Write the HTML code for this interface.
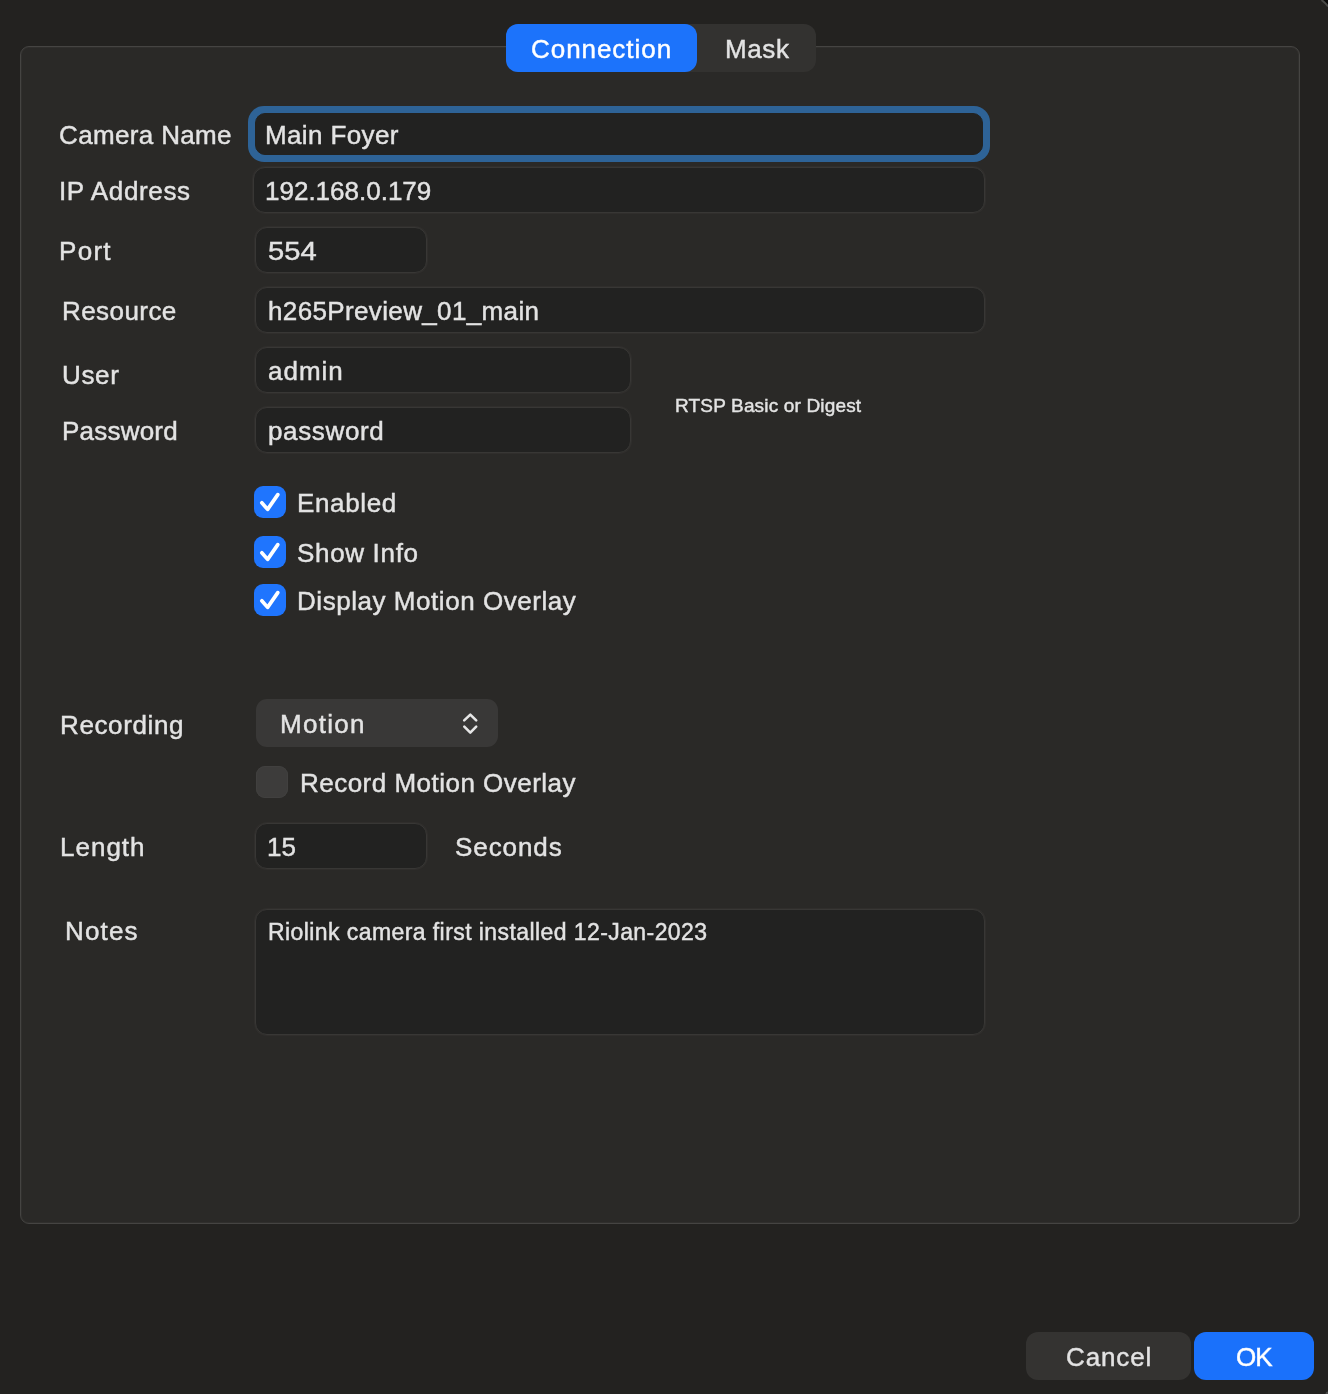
<!DOCTYPE html>
<html><head><meta charset="utf-8">
<style>
html,body{margin:0;padding:0;}
body{width:1328px;height:1394px;background:#232220;position:relative;overflow:hidden;font-family:"Liberation Sans",sans-serif;color:#e3e3e3;}
.a{position:absolute;}
.t{position:absolute;font-size:26px;line-height:30px;white-space:nowrap;-webkit-text-stroke:0.45px currentColor;will-change:transform;}
.group{left:20px;top:46px;width:1278px;height:1176px;border:1px solid #454442;border-radius:9px;background:#2a2927;box-shadow:inset 0 0 0 1px #302f2d;}
.fld{position:absolute;background:#222221;border:1px solid #383735;border-radius:12px;box-sizing:border-box;box-shadow:0 0 0 1px rgba(52,51,49,0.55);}
.cb{position:absolute;width:32px;height:32px;border-radius:9px;background:#1f75fe;}
.seg{left:506px;top:24px;width:310px;height:48px;border-radius:12px;background:#333230;}
.segsel{left:506px;top:24px;width:191px;height:48px;border-radius:12px;background:#1c73fb;}
</style></head><body>
<div class="a group"></div>

<div class="a seg"></div>
<div class="a segsel"></div>
<div class="t" style="left:531px;top:34px;color:#fff;letter-spacing:0.95px;">Connection</div>
<div class="t" style="left:724.5px;top:34px;letter-spacing:0.6px;">Mask</div>

<!-- labels -->
<div class="t" style="left:59px;top:120px;letter-spacing:0.35px;">Camera Name</div>
<div class="t" style="left:58.5px;top:176px;letter-spacing:0.65px;">IP Address</div>
<div class="t" style="left:59px;top:236px;letter-spacing:1.3px;">Port</div>
<div class="t" style="left:61.5px;top:296px;letter-spacing:0.43px;">Resource</div>
<div class="t" style="left:61.5px;top:360px;letter-spacing:0.67px;">User</div>
<div class="t" style="left:61.5px;top:416px;letter-spacing:0.22px;">Password</div>
<div class="t" style="left:59.5px;top:710px;letter-spacing:0.62px;">Recording</div>
<div class="t" style="left:59.5px;top:832px;letter-spacing:1.0px;">Length</div>
<div class="t" style="left:65px;top:916px;letter-spacing:1.15px;">Notes</div>

<!-- Camera name field with focus ring -->
<div class="a" style="left:248px;top:106px;width:742px;height:56px;border-radius:16px;background:#2e6397;"></div>
<div class="fld" style="left:255px;top:113px;width:728px;height:42px;border-radius:10px;border-color:#222221;box-shadow:none;"></div>
<div class="t" style="left:265px;top:120px;letter-spacing:0.37px;">Main Foyer</div>

<div class="fld" style="left:253px;top:167px;width:732px;height:46px;"></div>
<div class="t" style="left:265px;top:176px;">192.168.0.179</div>

<div class="fld" style="left:255px;top:227px;width:172px;height:46px;"></div>
<div class="t" style="left:268px;top:236px;transform:scaleX(1.12);transform-origin:0 0;">554</div>

<div class="fld" style="left:255px;top:287px;width:730px;height:46px;"></div>
<div class="t" style="left:267.5px;top:296px;letter-spacing:0.36px;">h265Preview_01_main</div>

<div class="fld" style="left:255px;top:347px;width:376px;height:46px;"></div>
<div class="t" style="left:267.5px;top:356px;letter-spacing:1px;">admin</div>

<div class="fld" style="left:255px;top:407px;width:376px;height:46px;"></div>
<div class="t" style="left:267.5px;top:416px;letter-spacing:0.65px;">password</div>

<div class="t" style="left:675px;top:394.5px;font-size:19px;line-height:22px;letter-spacing:0.16px;">RTSP Basic or Digest</div>

<!-- checkboxes -->
<div class="cb" style="left:254px;top:486px;"><svg width="32" height="32" viewBox="0 0 32 32"><path d="M7.8 16.8 L13.6 23.4 L23.8 8.6" fill="none" stroke="#fff" stroke-width="3.7" stroke-linecap="round" stroke-linejoin="round"/></svg></div>
<div class="t" style="left:297px;top:488px;letter-spacing:0.65px;">Enabled</div>
<div class="cb" style="left:254px;top:536px;"><svg width="32" height="32" viewBox="0 0 32 32"><path d="M7.8 16.8 L13.6 23.4 L23.8 8.6" fill="none" stroke="#fff" stroke-width="3.7" stroke-linecap="round" stroke-linejoin="round"/></svg></div>
<div class="t" style="left:296.5px;top:538px;letter-spacing:0.67px;">Show Info</div>
<div class="cb" style="left:254px;top:584px;"><svg width="32" height="32" viewBox="0 0 32 32"><path d="M7.8 16.8 L13.6 23.4 L23.8 8.6" fill="none" stroke="#fff" stroke-width="3.7" stroke-linecap="round" stroke-linejoin="round"/></svg></div>
<div class="t" style="left:297px;top:586px;letter-spacing:0.55px;">Display Motion Overlay</div>

<!-- popup -->
<div class="a" style="left:256px;top:699px;width:242px;height:48px;border-radius:11px;background:#393837;"></div>
<div class="t" style="left:279.5px;top:709px;letter-spacing:1.3px;">Motion</div>
<svg class="a" style="left:456px;top:705px;" width="30" height="40" viewBox="0 0 30 40"><path d="M8.2 15.4 L14.3 9.6 L20.2 15.4 M8.3 21.7 L14.3 27.7 L20.2 21.7" fill="none" stroke="#e6e6e6" stroke-width="2.6" stroke-linecap="round" stroke-linejoin="round"/></svg>

<div class="a" style="left:256px;top:766px;width:32px;height:32px;border-radius:9px;background:#3d3c3b;box-shadow:inset 0 0 0 1px #41403f;"></div>
<div class="t" style="left:299.5px;top:768px;letter-spacing:0.48px;">Record Motion Overlay</div>

<div class="fld" style="left:255px;top:823px;width:172px;height:46px;"></div>
<div class="t" style="left:266.5px;top:832px;">15</div>
<div class="t" style="left:454.5px;top:832px;letter-spacing:0.93px;">Seconds</div>

<div class="fld" style="left:255px;top:909px;width:730px;height:126px;"></div>
<div class="t" style="left:267.5px;top:918px;font-size:23px;line-height:28px;letter-spacing:0.42px;">Riolink camera first installed 12-Jan-2023</div>

<!-- buttons -->
<div class="a" style="left:1026px;top:1332px;width:165px;height:48px;border-radius:12px;background:#343331;"></div>
<div class="t" style="left:1066px;top:1341.5px;letter-spacing:0.86px;">Cancel</div>
<div class="a" style="left:1194px;top:1332px;width:120px;height:48px;border-radius:12px;background:#1a71fb;"></div>
<div class="t" style="left:1236px;top:1341.5px;color:#fff;letter-spacing:-1px;">OK</div>
<svg class="a" style="left:1308px;top:0;" width="20" height="20" viewBox="0 0 20 20"><path d="M14 0 L20 0 L20 6 Z" fill="#0a0a0a"/><path d="M13.5 0 Q17 2.5 20 6.5" fill="none" stroke="#4a4a48" stroke-width="2"/></svg>
<svg class="a" style="left:1318px;top:1384px;" width="10" height="10" viewBox="0 0 10 10"><circle cx="10" cy="10" r="2.5" fill="#4a4a48"/></svg>
</body></html>
